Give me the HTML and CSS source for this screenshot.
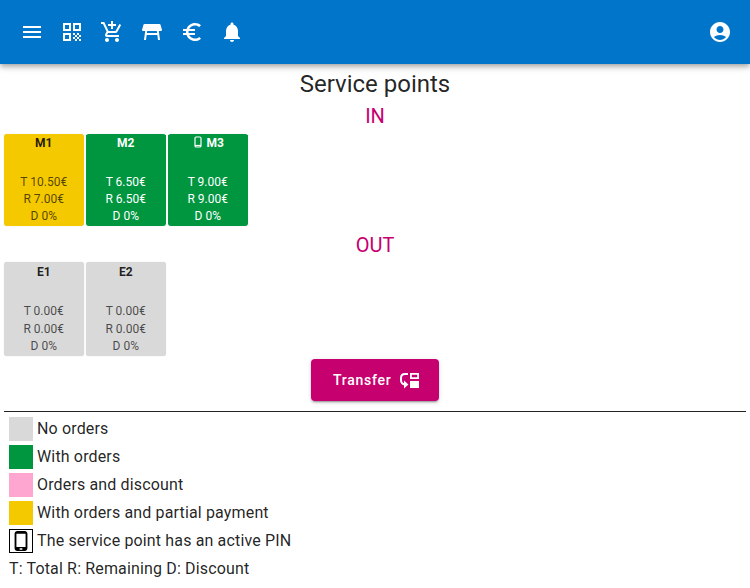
FILE: index.html
```html
<!DOCTYPE html>
<html lang="en">
<head>
    <meta charset="UTF-8">
    <meta name="viewport" content="width=device-width, initial-scale=1.0">
    <title>Service points</title>
    <link rel="stylesheet" href="styles.css">
</head>
<body>
    <header class="toolbar">
        <button class="icon-btn" aria-label="Menu">
            <svg viewBox="0 0 24 24"><path d="M3 18h18v-2H3v2zm0-5h18v-2H3v2zm0-7v2h18V6H3z"/></svg>
        </button>
        <button class="icon-btn" aria-label="QR code">
            <svg viewBox="0 0 24 24"><path d="M3 11h8V3H3v8zm2-6h4v4H5V5zM3 21h8v-8H3v8zm2-6h4v4H5v-4zM13 3v8h8V3h-8zm6 6h-4V5h4v4zM19 19h2v2h-2zM13 13h2v2h-2zM15 15h2v2h-2zM13 17h2v2h-2zM15 19h2v2h-2zM17 17h2v2h-2zM17 13h2v2h-2zM19 15h2v2h-2z"/></svg>
        </button>
        <button class="icon-btn" aria-label="Add to cart">
            <svg viewBox="0 0 24 24"><path d="M11 9h2V6h3V4h-3V1h-2v3H8v2h3v3zm-4 9c-1.1 0-1.99.9-1.99 2S5.9 22 7 22s2-.9 2-2-.9-2-2-2zm10 0c-1.1 0-1.99.9-1.99 2s.89 2 1.99 2 2-.9 2-2-.9-2-2-2zm-9.83-3.25l.03-.12.9-1.63h7.45c.75 0 1.41-.41 1.75-1.03l3.86-7.01L19.42 4h-.01l-1.1 2-2.76 5H8.53l-.13-.27L6.16 6l-.95-2-.94-2H1v2h2l3.6 7.59-1.35 2.45c-.16.28-.25.61-.25.96 0 1.1.9 2 2 2h12v-2H7.42c-.13 0-.25-.11-.25-.25z"/></svg>
        </button>
        <button class="icon-btn" aria-label="Tables">
            <svg viewBox="0 0 24 24"><path d="M21.96 9.73l-1.43-5C20.41 4.3 20.02 4 19.57 4H4.43C3.98 4 3.59 4.3 3.47 4.73l-1.43 5C1.86 10.36 2.34 11 3 11h2.2L4 20h2l.67-5h10.67l.66 5h2l-1.2-9H21c.66 0 1.14-.64.96-1.27zM6.93 13l.27-2h9.6l.27 2H6.93z"/></svg>
        </button>
        <button class="icon-btn" aria-label="Payments">
            <svg viewBox="0 0 24 24"><path d="M15 18.5c-2.51 0-4.68-1.42-5.76-3.5H15v-2H8.58c-.05-.33-.08-.66-.08-1s.03-.67.08-1H15V9H9.24C10.32 6.92 12.5 5.5 15 5.5c1.61 0 3.09.59 4.23 1.57L21 5.3C19.41 3.87 17.3 3 15 3c-3.92 0-7.24 2.51-8.48 6H3v2h3.06c-.04.33-.06.66-.06 1s.02.67.06 1H3v2h3.52c1.24 3.49 4.56 6 8.48 6 2.31 0 4.41-.87 6-2.3l-1.78-1.77c-1.13.98-2.6 1.57-4.22 1.57z"/></svg>
        </button>
        <button class="icon-btn" aria-label="Notifications">
            <svg viewBox="0 0 24 24"><path d="M12 22c1.1 0 2-.9 2-2h-4c0 1.1.89 2 2 2zm6-6v-5c0-3.07-1.64-5.64-4.5-6.32V4c0-.83-.67-1.5-1.5-1.5s-1.5.67-1.5 1.5v.68C7.63 5.36 6 7.92 6 11v5l-2 2v1h16v-1l-2-2z"/></svg>
        </button>
        <span class="spacer"></span>
        <button class="icon-btn" aria-label="Account">
            <svg viewBox="0 0 24 24"><path d="M12 2C6.48 2 2 6.48 2 12s4.48 10 10 10 10-4.48 10-10S17.52 2 12 2zm0 4c1.93 0 3.5 1.57 3.5 3.5S13.93 13 12 13s-3.5-1.57-3.5-3.5S10.07 6 12 6zm0 14c-2.03 0-4.43-.82-6.14-2.88C7.55 15.8 9.68 15 12 15s4.45.8 6.14 2.12C16.43 19.18 14.03 20 12 20z"/></svg>
        </button>
    </header>

    <main class="content">
        <h1>Service points</h1>

        <h2>IN</h2>
        <div class="points">
            <div class="point yellow">
                <div class="point-name">M1</div>
                <div>T 10.50€</div>
                <div>R 7.00€</div>
                <div>D 0%</div>
            </div>
            <div class="point green">
                <div class="point-name">M2</div>
                <div>T 6.50€</div>
                <div>R 6.50€</div>
                <div>D 0%</div>
            </div>
            <div class="point green">
                <div class="point-name">
                    <svg class="pin" viewBox="0 0 24 24"><rect x="6" y="2" width="12" height="20" rx="2.5"/><path d="M6 19h12"/></svg>
                    M3
                </div>
                <div>T 9.00€</div>
                <div>R 9.00€</div>
                <div>D 0%</div>
            </div>
        </div>

        <h2 class="out">OUT</h2>
        <div class="points points-out">
            <div class="point grey">
                <div class="point-name">E1</div>
                <div>T 0.00€</div>
                <div>R 0.00€</div>
                <div>D 0%</div>
            </div>
            <div class="point grey">
                <div class="point-name">E2</div>
                <div>T 0.00€</div>
                <div>R 0.00€</div>
                <div>D 0%</div>
            </div>
        </div>

        <div class="actions">
            <button class="transfer">
                Transfer
                <svg viewBox="0 0 24 24">
                    <path class="transfer-arrow" d="M11 6H8C5.6 6 4 7.7 4 10v2c0 2.4 1.7 4.2 4 4.4"/>
                    <path d="M7 12.6l4.4 4-4.4 4z"/>
                    <path fill-rule="evenodd" d="M13 5h9v6h-9zm1.8 1.8v2.4h5.4V6.8z"/>
                    <path d="M13 13h9v7h-9z"/>
                </svg>
            </button>
        </div>

        <hr>

        <ul class="legend">
            <li><span class="swatch grey"></span>No orders</li>
            <li><span class="swatch green"></span>With orders</li>
            <li><span class="swatch pink"></span>Orders and discount</li>
            <li><span class="swatch yellow"></span>With orders and partial payment</li>
            <li>
                <span class="swatch phone">
                    <svg viewBox="0 0 24 24"><path d="M16 1H8C6.34 1 5 2.34 5 4v16c0 1.66 1.34 3 3 3h8c1.66 0 3-1.34 3-3V4c0-1.66-1.34-3-3-3zm-2.5 20.5h-3v-1.6h3zm3.5-3H7V4h10z"/></svg>
                </span>
                The service point has an active PIN
            </li>
            <li>T: Total R: Remaining D: Discount</li>
        </ul>
    </main>
</body>
</html>
```

FILE: styles.css
```css
* {
    box-sizing: border-box;
}
body {
    font-family: Roboto, sans-serif;
    margin: 0;
    color: rgba(0, 0, 0, 0.87);
    background-color: white;
}
button {
    font-family: inherit;
}
.toolbar {
    display: flex;
    align-items: center;
    height: 64px;
    padding: 0 10px 0 12px;
    background-color: #0075c9;
    box-shadow: 0 2px 4px -1px rgba(0, 0, 0, 0.2), 0 4px 5px rgba(0, 0, 0, 0.14), 0 1px 10px rgba(0, 0, 0, 0.12);
}
.icon-btn {
    width: 40px;
    height: 40px;
    padding: 8px;
    border: none;
    background: none;
    display: flex;
}
.icon-btn svg {
    width: 24px;
    height: 24px;
    fill: white;
}
.spacer {
    flex: 1;
}
.content {
    padding: 4px 4px 0;
}
h1 {
    margin: 0;
    height: 32px;
    font-size: 24px;
    font-weight: 400;
    line-height: 32px;
    text-align: center;
}
h2 {
    margin: 0;
    padding-top: 3px;
    height: 32px;
    font-size: 20px;
    font-weight: 400;
    line-height: 26px;
    text-align: center;
    color: #c6006f;
}
h2.out {
    margin-top: 3px;
    height: 31px;
}
.points {
    display: flex;
    gap: 1.5px;
    margin-left: -0.5px;
    padding-top: 2px;
}
.point {
    width: 80.5px;
    height: 92px;
    padding-top: 1px;
    border-radius: 3px;
    font-size: 12px;
    line-height: 17px;
    text-align: center;
    box-shadow: 0 0 1px rgba(0, 0, 0, 0.2);
    color: rgba(0, 0, 0, 0.68);
}
.point-name {
    height: 39px;
    font-weight: 700;
    color: rgba(0, 0, 0, 0.87);
}
.points-out .point {
    height: 94px;
    padding-top: 2px;
    line-height: 17.5px;
}
.pin {
    width: 12px;
    height: 12px;
    vertical-align: -1px;
    fill: none;
    stroke: currentColor;
    stroke-width: 2.4;
}
.green,
.green .point-name {
    background-color: #00963f;
    color: white;
}
.yellow {
    background-color: #f5c900;
}
.grey {
    background-color: #d9d9d9;
}
.pink {
    background-color: #ffa6d0;
}
.actions {
    display: flex;
    justify-content: center;
    padding-top: 3px;
}
.transfer {
    display: flex;
    align-items: center;
    gap: 5px;
    width: 128px;
    height: 42px;
    padding: 0 0 0 22px;
    border: none;
    border-radius: 4px;
    background-color: #c6006f;
    color: white;
    font-size: 14px;
    font-weight: 500;
    letter-spacing: 0.75px;
    box-shadow: 0 3px 1px -2px rgba(0, 0, 0, 0.2), 0 2px 2px rgba(0, 0, 0, 0.14), 0 1px 5px rgba(0, 0, 0, 0.12);
}
.transfer svg {
    width: 24px;
    height: 24px;
    fill: white;
}
.transfer-arrow {
    fill: none;
    stroke: white;
    stroke-width: 2;
}
hr {
    margin: 10px 0 0;
    border: none;
    border-top: 1px solid #222;
}
.legend {
    list-style: none;
    margin: 0;
    padding: 5px 0 0 5px;
    font-size: 16px;
    line-height: 23px;
    letter-spacing: 0.15px;
}
.legend li {
    display: flex;
    gap: 4px;
    height: 24px;
    margin-bottom: 4px;
}
.swatch {
    width: 24px;
    height: 24px;
}
.phone {
    border: 1px solid black;
    display: flex;
}
.phone svg {
    width: 22px;
    height: 22px;
}
```
